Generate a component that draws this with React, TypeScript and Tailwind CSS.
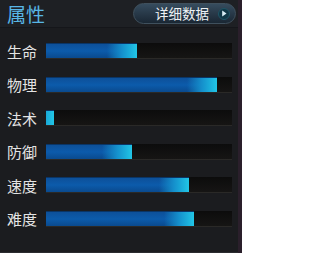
import React from 'react';

type Stat = { label: string; pct: number };

const STATS: Stat[] = [
  { label: '生命', pct: 49 },
  { label: '物理', pct: 92 },
  { label: '法术', pct: 4.5 },
  { label: '防御', pct: 46.5 },
  { label: '速度', pct: 77 },
  { label: '难度', pct: 79.5 },
];

const FONT = { fontFamily: '"Noto Sans CJK SC", "Noto Sans", sans-serif' };

function StatBar({ pct }: { pct: number }) {
  return (
    <div className="relative h-[16px] w-[186px] bg-gradient-to-b from-[#0c0c0c] to-[#161514] border-b border-[#2a2927]">
      <div
        className="relative h-full overflow-hidden bg-gradient-to-b from-[#0d5099] via-[#0c5bab] to-[#0a4a8e] border-t border-[#0a3566]"
        style={{ width: `${pct}%` }}
      >
        <div className="absolute right-0 top-0 h-full w-[30px] bg-gradient-to-r from-[#0c5bab00] via-[#1590cc] to-[#22c6e6]" />
      </div>
    </div>
  );
}

export default function App() {
  return (
    <div className="w-[242px] h-[253px] bg-[#2a1f2b] flex" style={FONT}>
      <div className="w-[238px] h-full bg-[#1b1c1f] flex flex-col border-b border-[#2b2c30]">
        {/* HEADER */}
        <header className="h-[28px] shrink-0 flex items-center justify-between pl-[7px] pr-[2px] bg-[#1e2024] border-b border-[#15161a]">
          <h1 className="text-[19px] leading-none text-[#58b6e6]">属性</h1>
          <button className="h-[21px] w-[103px] rounded-full border border-[#3f505d] bg-gradient-to-b from-[#364c5e] to-[#1a2734] flex items-center justify-end gap-[9px] pr-[5px]">
            <span className="text-[13.5px] leading-none text-[#eef2f5]">详细数据</span>
            <span className="w-[12px] h-[12px] rounded-full bg-[#103847] border border-[#1f5566] flex items-center justify-center">
              <svg width="6" height="7" viewBox="0 0 6 7">
                <path d="M1.2 0.5 L5.5 3.5 L1.2 6.5 Z" fill="#d8eef5" />
              </svg>
            </span>
          </button>
        </header>

        {/* STATS */}
        <section className="flex flex-col gap-[17.6px] pt-[15px] pl-[7px]">
          {STATS.map((s) => (
            <div key={s.label} className="flex items-center h-[16px]">
              <span className="w-[39px] text-[15px] leading-none text-[#e4e4e4]">{s.label}</span>
              <StatBar pct={s.pct} />
            </div>
          ))}
        </section>
      </div>
    </div>
  );
}
